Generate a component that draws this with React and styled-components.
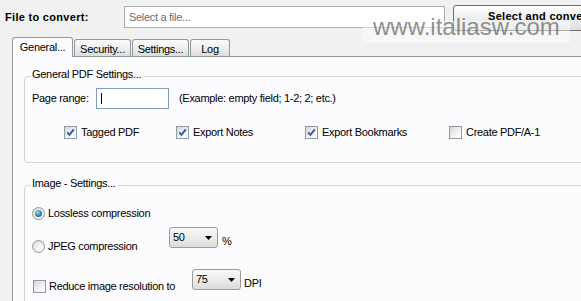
import React from "react"
import styled, { createGlobalStyle } from "styled-components"

const GlobalStyle = createGlobalStyle`
  body {
    margin: 0;
    background: #f1f1f1;
  }

  * {
    box-sizing: border-box;
  }
`

const Window = styled.div`
  position: relative;
  width: 581px;
  height: 301px;
  overflow: hidden;
  background: #f1f1f1;
  font-family: "Liberation Sans", Arial, sans-serif;
  font-size: 11px;
  line-height: 13px;
  letter-spacing: -0.3px;
  color: #000;
`

const TopBar = styled.div`
  display: flex;
  align-items: flex-start;
  height: 37px;
  padding-left: 5px;
`

const FileLabel = styled.span`
  width: 119px;
  margin-top: 11px;
  font-weight: 700;
  letter-spacing: 0.3px;
  flex-shrink: 0;
`

const FileInput = styled.div`
  display: flex;
  align-items: center;
  width: 321px;
  height: 22px;
  margin-top: 6px;
  padding-left: 4px;
  flex-shrink: 0;
  background: #fff;
  border: 1px solid #abadb3;
  color: #6d6d6d;
`

const ConvertButton = styled.div`
  display: flex;
  align-items: center;
  width: 180px;
  height: 26px;
  margin: 5px 0 0 8px;
  padding: 0 0 3px 34px;
  flex-shrink: 0;
  border: 1px solid #707070;
  border-radius: 3px;
  background: linear-gradient(#fefefe, #efefef 50%, #dedede);
  font-weight: 700;
  letter-spacing: 0.3px;
  white-space: nowrap;
`

const Watermark = styled.div`
  position: absolute;
  left: 362px;
  top: 21px;
  width: 208px;
  height: 22px;
  padding-left: 11px;
  background: rgba(255, 255, 255, 0.45);
  color: rgba(115, 115, 115, 0.8);
  font-size: 24px;
  line-height: 12px;
  letter-spacing: 0;
`

const TabBar = styled.div`
  position: relative;
  z-index: 1;
  display: flex;
  align-items: flex-end;
  height: 19px;
  padding-left: 12px;
`

const Tab = styled.div`
  display: flex;
  align-items: center;
  justify-content: center;
  width: ${({ $w }) => $w}px;
  height: ${({ $active }) => ($active ? 20 : 17)}px;
  margin-bottom: ${({ $active }) => ($active ? -1 : 0)}px;
  margin-right: 1px;
  padding-top: ${({ $active }) => ($active ? 0 : 2)}px;
  border: 1px solid #919b9c;
  border-bottom: none;
  border-radius: 3px 3px 0 0;
  background: ${({ $active }) =>
    $active ? "#fcfcfe" : "linear-gradient(#fbfbfb, #ececec 60%, #dcdcdc)"};
`

const Panel = styled.div`
  height: 245px;
  margin-left: 12px;
  padding: 11px 0 0 11px;
  border-top: 1px solid #919b9c;
  border-left: 1px solid #919b9c;
  background: #fcfcfe;
`

const Group = styled.fieldset`
  width: 600px;
  margin: ${({ $gap }) => $gap || 0}px 0 0;
  padding: 0 0 ${({ $bottom }) => $bottom || 0}px 6px;
  border: 1px solid #d5d5c8;
  border-radius: 4px;
`

const GroupTitle = styled.legend`
  padding: 0 2px 3px 1px;
  line-height: 13px;
`

const PageRow = styled.div`
  display: flex;
  align-items: center;
  height: 21px;
  margin: 4px 0 0 1px;
`

const FieldLabel = styled.span`
  width: 64px;
`

const RangeInput = styled.div`
  display: flex;
  align-items: center;
  width: 73px;
  height: 21px;
  padding-left: 4px;
  background: #fff;
  border: 1px solid #7f9db9;
`

const Caret = styled.span`
  width: 1px;
  height: 11px;
  background: #000;
`

const Hint = styled.span`
  margin-left: 10px;
`

const CheckRow = styled.div`
  display: grid;
  grid-template-columns: 112px 129px 144px auto;
  margin-top: 17px;
  padding-left: 33px;
`

const Option = styled.label`
  display: flex;
  align-items: center;
  gap: ${({ $gap }) => $gap || 4}px;
  width: ${({ $w }) => ($w ? `${$w}px` : "auto")};
  margin-top: ${({ $top }) => $top || 0}px;
  margin-left: ${({ $left }) => $left || 0}px;
  flex-shrink: 0;
`

const Box = styled.span`
  display: flex;
  align-items: center;
  justify-content: center;
  width: 13px;
  height: 13px;
  border: 1px solid #8f9aa5;
  background: linear-gradient(135deg, #d8d8d8, #f6f6f6 70%, #fff);
  flex-shrink: 0;
`

const Round = styled.span`
  display: flex;
  align-items: center;
  justify-content: center;
  width: 13px;
  height: 13px;
  border-radius: 50%;
  border: 1px solid #949494;
  background: radial-gradient(circle at 65% 70%, #fff, #dadada);
  flex-shrink: 0;

  &::after {
    content: "";
    display: ${({ $checked }) => ($checked ? "block" : "none")};
    width: 7px;
    height: 7px;
    border-radius: 50%;
    background: radial-gradient(circle at 40% 35%, #9fdcf6, #2779ab 60%, #0f4670);
  }
`

const Rows = styled.div`
  display: flex;
  flex-direction: column;
  padding-top: 14px;
`

const SettingRow = styled.div`
  display: flex;
  align-items: flex-start;
  margin-top: ${({ $gap }) => $gap || 0}px;
`

const Dropdown = styled.div`
  display: flex;
  align-items: center;
  justify-content: space-between;
  width: 49px;
  height: 21px;
  padding: 0 5px 0 3px;
  border: 1px solid #9c9c9c;
  border-radius: 3px;
  background: linear-gradient(#f9f9f9, #e9e9e9 60%, #dadada);
  flex-shrink: 0;
`

const Unit = styled.span`
  margin: 8px 0 0 ${({ $left }) => $left}px;
`

const Check = ({ checked }) => (
  <Box>
    {checked && (
      <svg width="9" height="9" viewBox="0 0 9 9">
        <path d="M1.2 4.4 L3.5 6.9 L7.8 1.4" fill="none" stroke="#3558b0" strokeWidth="1.9" />
      </svg>
    )}
  </Box>
)

const Select = ({ value }) => (
  <Dropdown>
    <span>{value}</span>
    <svg width="7" height="4" viewBox="0 0 7 4">
      <path d="M0 0 H7 L3.5 4 Z" fill="#000" />
    </svg>
  </Dropdown>
)

const tabs = [
  { label: "General...", w: 61, active: true },
  { label: "Security...", w: 57 },
  { label: "Settings...", w: 57 },
  { label: "Log", w: 40 },
]

const flags = [
  { label: "Tagged PDF", checked: true },
  { label: "Export Notes", checked: true },
  { label: "Export Bookmarks", checked: true },
  { label: "Create PDF/A-1", checked: false },
]

export default function App() {
  return (
    <Window>
      <GlobalStyle />
      <TopBar>
        <FileLabel>File to convert:</FileLabel>
        <FileInput>Select a file...</FileInput>
        <ConvertButton>Select and convert</ConvertButton>
      </TopBar>
      <Watermark>www.italiasw.com</Watermark>

      <TabBar>
        {tabs.map((t) => (
          <Tab key={t.label} $w={t.w} $active={t.active}>
            {t.label}
          </Tab>
        ))}
      </TabBar>

      <Panel>
        <Group $bottom={23}>
          <GroupTitle>General PDF Settings...</GroupTitle>
          <PageRow>
            <FieldLabel>Page range:</FieldLabel>
            <RangeInput>
              <Caret />
            </RangeInput>
            <Hint>(Example: empty field; 1-2; 2; etc.)</Hint>
          </PageRow>
          <CheckRow>
            {flags.map((f) => (
              <Option key={f.label}>
                <Check checked={f.checked} />
                {f.label}
              </Option>
            ))}
          </CheckRow>
        </Group>

        <Group $gap={14} $bottom={40}>
          <GroupTitle>Image - Settings...</GroupTitle>
          <Rows>
            <SettingRow>
              <Option $gap={3} $left={1}>
                <Round $checked />
                Lossless compression
              </Option>
            </SettingRow>
            <SettingRow $gap={7}>
              <Option $gap={3} $left={1} $w={137} $top={13}>
                <Round />
                JPEG compression
              </Option>
              <Select value="50" />
              <Unit $left={4}>%</Unit>
            </SettingRow>
            <SettingRow $gap={16}>
              <Option $left={2} $w={159} $top={11} $gap={3}>
                <Check />
                Reduce image resolution to
              </Option>
              <Select value="75" />
              <Unit $left={3}>DPI</Unit>
            </SettingRow>
          </Rows>
        </Group>
      </Panel>
    </Window>
  )
}
